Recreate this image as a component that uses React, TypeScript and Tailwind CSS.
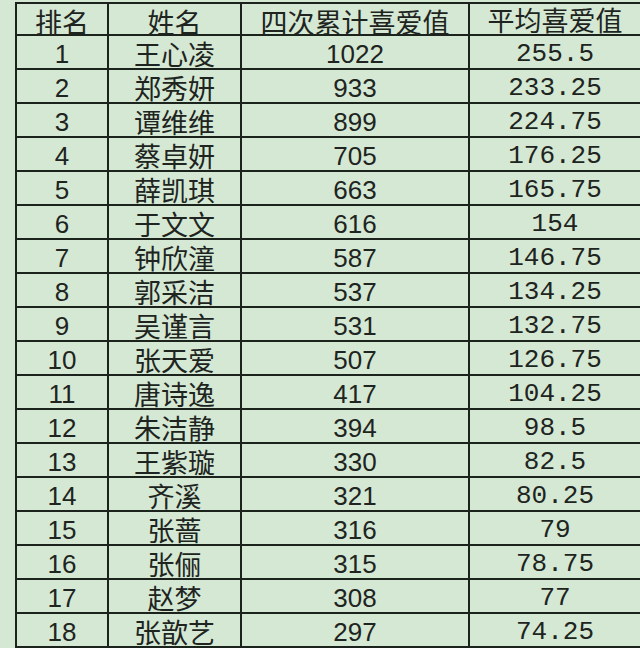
const rows: [string, string, string, string][] = [
  ["1", "王心凌", "1022", "255.5"],
  ["2", "郑秀妍", "933", "233.25"],
  ["3", "谭维维", "899", "224.75"],
  ["4", "蔡卓妍", "705", "176.25"],
  ["5", "薛凯琪", "663", "165.75"],
  ["6", "于文文", "616", "154"],
  ["7", "钟欣潼", "587", "146.75"],
  ["8", "郭采洁", "537", "134.25"],
  ["9", "吴谨言", "531", "132.75"],
  ["10", "张天爱", "507", "126.75"],
  ["11", "唐诗逸", "417", "104.25"],
  ["12", "朱洁静", "394", "98.5"],
  ["13", "王紫璇", "330", "82.5"],
  ["14", "齐溪", "321", "80.25"],
  ["15", "张蔷", "316", "79"],
  ["16", "张俪", "315", "78.75"],
  ["17", "赵梦", "308", "77"],
  ["18", "张歆艺", "297", "74.25"],
];

const cjk = "font-['Noto_Sans_CJK_SC',sans-serif]";
const sans = "font-['Liberation_Sans','Noto_Sans_CJK_SC',sans-serif]";
const mono = "font-['Liberation_Mono',monospace]";

function Cell({ children, font, size }: { children: React.ReactNode; font: string; size: string }) {
  return (
    <div className={`flex items-start justify-center bg-[#d5e8d4] pt-[4px] leading-[28px] text-[#202420] ${font} ${size}`}>
      {children}
    </div>
  );
}

export default function App() {
  return (
    <div className="w-[640px] h-[648px] overflow-hidden bg-[#d5e8d4] pl-[15px] pt-[2px]">
      <div className="w-[660px] grid grid-cols-[90px_131px_226px_180px] grid-rows-[30px] auto-rows-[32px] gap-[2px] bg-[#1c231d] p-[2px]">
        <Cell font={cjk} size="text-[27px]">排名</Cell>
        <Cell font={cjk} size="text-[27px]">姓名</Cell>
        <Cell font={cjk} size="text-[27px]">四次累计喜爱值</Cell>
        <div className={`flex items-start justify-start bg-[#d5e8d4] pt-[2px] leading-[28px] text-[#202420] ${cjk} text-[27px]`}>
          <span className="w-[170px] text-center">平均喜爱值</span>
        </div>
        {rows.map(([rank, name, total, avg]) => (
          <div key={rank} className="contents">
            <Cell font={sans} size="text-[26px]">{rank}</Cell>
            <Cell font={cjk} size="text-[27px]">{name}</Cell>
            <Cell font={sans} size="text-[26px]">{total}</Cell>
            <div className={`flex items-start justify-start bg-[#d5e8d4] pt-[4px] leading-[28px] text-[#202420] ${mono} text-[26px]`}>
              <span className="w-[170px] text-center">{avg}</span>
            </div>
          </div>
        ))}
      </div>
    </div>
  );
}
